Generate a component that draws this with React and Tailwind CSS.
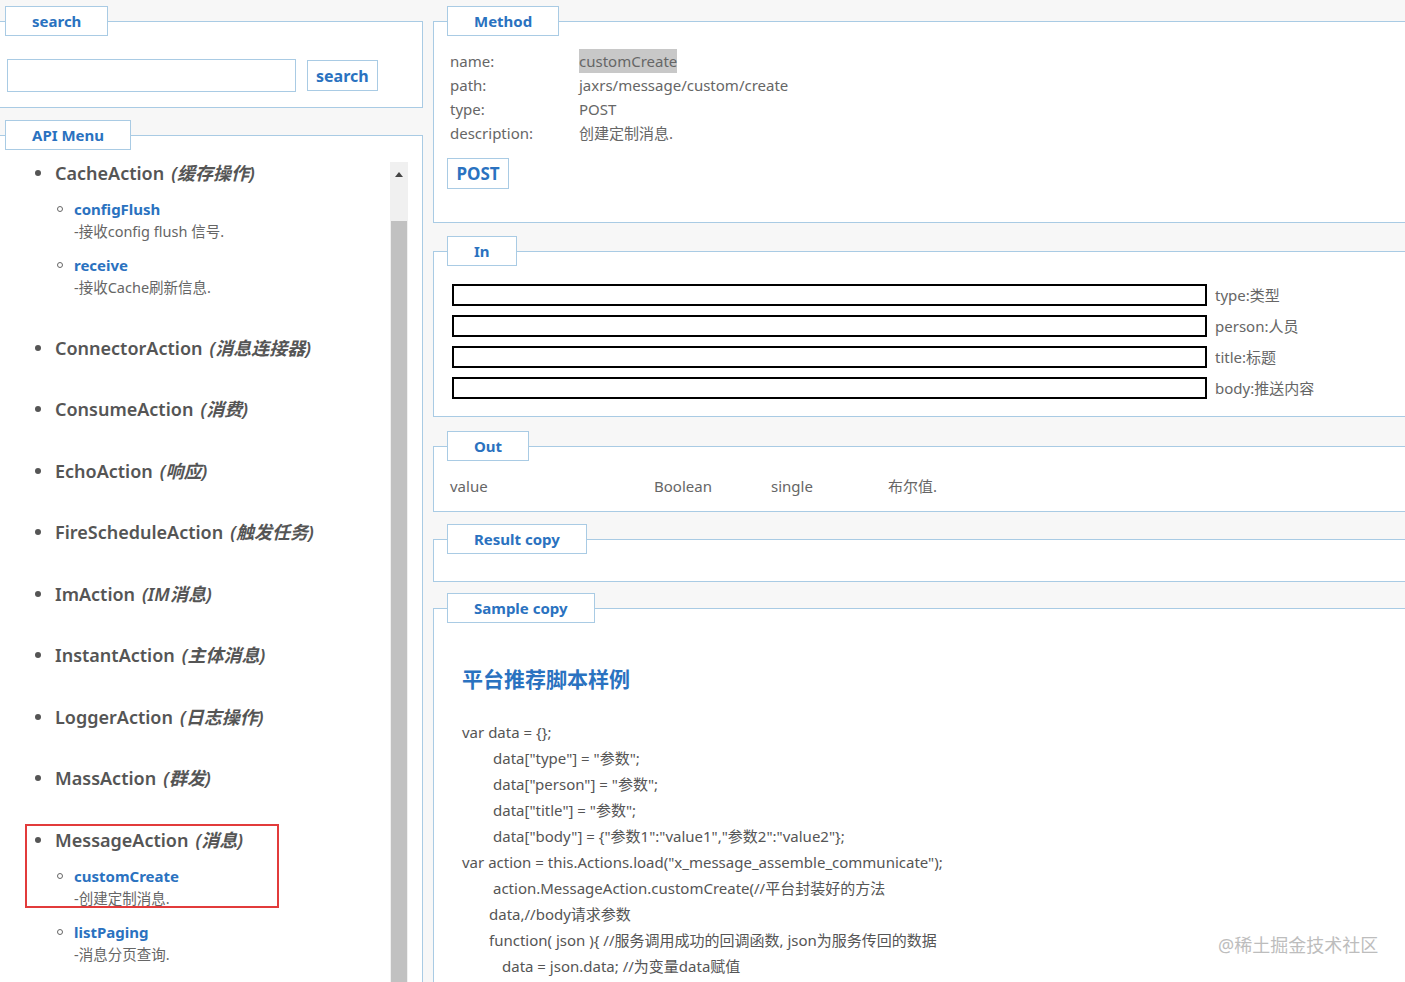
import React from "react";

const font = { fontFamily: '"Noto Sans", "Noto Sans CJK SC", sans-serif' };

function Box({ title, className = "", legendMl = "ml-[13px]", children }) {
  return (
    <fieldset className={`border border-[#a9cbe4] bg-white ${className}`}>
      <legend
        className={`${legendMl} border border-[#a9cbe4] bg-white px-[26px] text-[15px] font-bold leading-[28px] text-[#2a72c0]`}
      >
        {title}
      </legend>
      {children}
    </fieldset>
  );
}

const menu = [
  {
    name: "CacheAction",
    cn: "(缓存操作)",
    children: [
      { name: "configFlush", desc: "-接收config flush 信号." },
      { name: "receive", desc: "-接收Cache刷新信息." },
    ],
  },
  { name: "ConnectorAction", cn: "(消息连接器)" },
  { name: "ConsumeAction", cn: "(消费)" },
  { name: "EchoAction", cn: "(响应)" },
  { name: "FireScheduleAction", cn: "(触发任务)" },
  { name: "ImAction", cn: "(IM消息)" },
  { name: "InstantAction", cn: "(主体消息)" },
  { name: "LoggerAction", cn: "(日志操作)" },
  { name: "MassAction", cn: "(群发)" },
  {
    name: "MessageAction",
    cn: "(消息)",
    children: [
      { name: "customCreate", desc: "-创建定制消息." },
      { name: "listPaging", desc: "-消息分页查询." },
    ],
  },
];

const inputs = ["type:类型", "person:人员", "title:标题", "body:推送内容"];

const code = [
  { pad: "pl-0", text: 'var data = {};' },
  { pad: "pl-[31px]", text: 'data["type"] = "参数";' },
  { pad: "pl-[31px]", text: 'data["person"] = "参数";' },
  { pad: "pl-[31px]", text: 'data["title"] = "参数";' },
  { pad: "pl-[31px]", text: 'data["body"] = {"参数1":"value1","参数2":"value2"};' },
  { pad: "pl-0", text: 'var action = this.Actions.load("x_message_assemble_communicate");' },
  { pad: "pl-[31px]", text: "action.MessageAction.customCreate(//平台封装好的方法" },
  { pad: "pl-[27px]", text: "data,//body请求参数" },
  { pad: "pl-[27px]", text: "function( json ){ //服务调用成功的回调函数, json为服务传回的数据" },
  { pad: "pl-[40px]", text: "data = json.data; //为变量data赋值" },
];

export default function App() {
  return (
    <div
      className="relative flex h-screen overflow-hidden bg-[#f7f7f7] text-[#666]"
      style={font}
    >
      {/* left column */}
      <div className="w-[423px] shrink-0">
        <Box title="search" className="-ml-[2px] mt-[6px] w-[425px]" legendMl="ml-[6px]">
          <div className="flex items-center pb-[15px] pl-[8px] pt-[23px]">
            <input className="h-[33px] w-[289px] border border-[#a9cbe4] bg-white outline-none" />
            <button className="ml-[11px] h-[31px] border border-[#a9cbe4] bg-white px-[8px] text-[16px] font-bold leading-none text-[#2a72c0]">
              search
            </button>
          </div>
        </Box>

        <Box
          title="API Menu"
          className="-ml-[2px] mt-[12px] h-[900px] w-[425px]"
          legendMl="ml-[6px]"
        >
          <div className="flex pt-[11px]">
            <ul className="flex-1 pl-[36px] pt-0">
              {menu.map((m) => (
                <li key={m.name} className="mb-[37.5px]">
                  <div className="flex items-center text-[18px] font-semibold leading-[24px] text-[#555]">
                    <span className="mr-[14px] inline-block h-[6px] w-[6px] rounded-full bg-[#555]" />
                    <span>{m.name}</span>
                    <span className="ml-[7px] italic">{m.cn}</span>
                  </div>
                  {m.children && (
                    <ul className="mt-[13px] flex flex-col gap-[12px] pl-[22px]">
                      {m.children.map((c) => (
                        <li key={c.name}>
                          <div className="flex items-center text-[15px] font-bold leading-[22px] text-[#2a72c0]">
                            <span className="mr-[11px] inline-block h-[6px] w-[6px] rounded-full border border-[#666]" />
                            {c.name}
                          </div>
                          <div className="pl-[17px] text-[14.5px] leading-[22px] text-[#666]">
                            {c.desc}
                          </div>
                        </li>
                      ))}
                    </ul>
                  )}
                </li>
              ))}
            </ul>
            {/* scrollbar */}
            <div className="mr-[14px] mt-[1px] flex w-[18px] shrink-0 flex-col items-center bg-[#f0f0f0]">
              <div className="flex h-[24px] w-full items-center justify-center">
                <span className="inline-block h-0 w-0 border-x-[4.5px] border-b-[5px] border-x-transparent border-b-[#444]" />
              </div>
              <div className="mt-[35px] h-[900px] w-[16px] bg-[#c1c1c1]" />
            </div>
          </div>
        </Box>
      </div>

      {/* right column */}
      <div className="ml-[10px] flex-1 -mr-[20px]">
        <Box title="Method" className="mt-[6px]">
          <div className="pb-[33px] pl-[16px] pt-[13px] text-[15px] leading-[24px]">
            <div className="flex">
              <span className="w-[129px]">name:</span>
              <span className="bg-[#c8c8c8]">customCreate</span>
            </div>
            <div className="flex">
              <span className="w-[129px]">path:</span>
              <span>jaxrs/message/custom/create</span>
            </div>
            <div className="flex">
              <span className="w-[129px]">type:</span>
              <span>POST</span>
            </div>
            <div className="flex">
              <span className="w-[129px]">description:</span>
              <span>创建定制消息.</span>
            </div>
            <button className="-ml-[3px] mt-[13px] h-[31px] w-[62px] border border-[#a9cbe4] bg-white text-[17px] font-bold leading-none text-[#2a72c0]">
              POST
            </button>
          </div>
        </Box>

        <Box title="In" className="mt-[13px]">
          <div className="flex flex-col gap-[9px] pb-[17px] pl-[18px] pt-[18px]">
            {inputs.map((t) => (
              <div key={t} className="flex items-center">
                <input className="h-[22px] w-[755px] border-2 border-black bg-white outline-none" />
                <span className="ml-[8px] text-[15px] leading-[22px]">{t}</span>
              </div>
            ))}
          </div>
        </Box>

        <Box title="Out" className="mt-[14px]">
          <div className="flex pb-[13px] pl-[16px] pt-[13px] text-[15px] leading-[24px]">
            <span className="w-[204px]">value</span>
            <span className="w-[117px]">Boolean</span>
            <span className="w-[117px]">single</span>
            <span>布尔值.</span>
          </div>
        </Box>

        <Box title="Result copy" className="mt-[12px]">
          <div className="h-[27px]" />
        </Box>

        <Box title="Sample copy" className="mt-[11px] h-[500px]">
          <div className="pl-[28px] pt-[41px]">
            <h2 className="text-[21px] font-bold leading-[30px] text-[#2a72c0]">
              平台推荐脚本样例
            </h2>
            <div className="mt-[25px] text-[15px] leading-[26px] text-[#555]">
              {code.map((l, i) => (
                <div key={i} className={l.pad}>
                  {l.text}
                </div>
              ))}
            </div>
          </div>
        </Box>
      </div>

      {/* annotation box */}
      <div className="pointer-events-none absolute left-[25px] top-[824px] h-[84px] w-[254px] border-2 border-[#e23b3b]" />

      {/* watermark */}
      <div className="pointer-events-none absolute left-[1218px] top-[932px] text-[18px] leading-[26px] text-[#bdbdbd]">
        @稀土掘金技术社区
      </div>
    </div>
  );
}
